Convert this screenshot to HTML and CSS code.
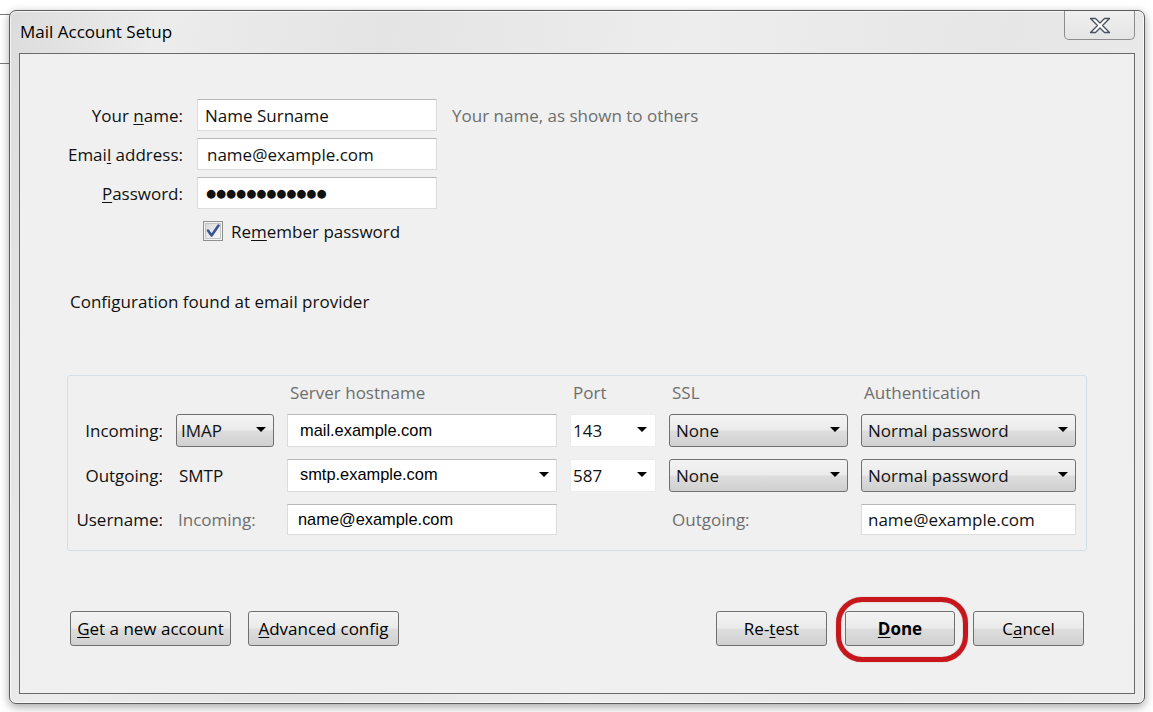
FILE: index.html
```html
<!DOCTYPE html>
<html lang="en">
<head>
  <meta charset="UTF-8">
  <title>Mail Account Setup</title>
  <link rel="stylesheet" href="styles.css">
</head>
<body>

<div class="behind"></div>

<div class="window">
  <div class="titlebar">
    <span class="title">Mail Account Setup</span>
    <div class="close">
      <svg width="22" height="17" viewBox="0 0 22 17">
        <path d="M1.5 1.5 H6.5 L11 6 L15.5 1.5 H20.5 L13.5 8.5 L20.5 15.5 H15.5 L11 11 L6.5 15.5 H1.5 L8.5 8.5 Z"
              fill="#fbfbfb" stroke="#47505e" stroke-width="1.3" stroke-linejoin="round"/>
      </svg>
    </div>
  </div>

  <div class="client">
    <div class="identity">
      <span class="lbl">Your <u>n</u>ame:</span>
      <div class="field">Name Surname</div>
      <span class="hint">Your name, as shown to others</span>

      <span class="lbl">Emai<u>l</u> address:</span>
      <div class="field email">name@example.com</div>
      <span></span>

      <span class="lbl"><u>P</u>assword:</span>
      <div class="field pass">●●●●●●●●●●●●</div>
      <span></span>

      <span></span>
      <div class="remember">
        <svg class="check" width="20" height="20" viewBox="0 0 20 20">
          <defs>
            <linearGradient id="cb" x1="0" y1="0" x2="1" y2="1">
              <stop offset="0" stop-color="#d8d8d8"/>
              <stop offset="1" stop-color="#fbfbfb"/>
            </linearGradient>
          </defs>
          <rect x="0.5" y="0.5" width="19" height="19" fill="#f4f4f4" stroke="#8e8f8f"/>
          <rect x="2.5" y="2.5" width="15" height="15" fill="url(#cb)" stroke="#c4c4c4"/>
          <path d="M5 9.5 L8.6 14.5 L15.5 4.5" fill="none" stroke="#3a5595" stroke-width="2.6" stroke-linecap="round" stroke-linejoin="round"/>
        </svg>
        <span>Re<u>m</u>ember password</span>
      </div>
    </div>

    <p class="status">Configuration found at email provider</p>

    <div class="servers">
      <span></span>
      <span></span>
      <span class="head">Server hostname</span>
      <span class="head">Port</span>
      <span class="head">SSL</span>
      <span class="head">Authentication</span>

      <span class="rlbl">Incoming:</span>
      <div class="select imap"><span>IMAP</span><i class="arrow"></i></div>
      <div class="field host">mail.example.com</div>
      <div class="field port"><span>143</span><i class="arrow"></i></div>
      <div class="select"><span>None</span><i class="arrow"></i></div>
      <div class="select"><span>Normal password</span><i class="arrow"></i></div>

      <span class="rlbl">Outgoing:</span>
      <span class="proto">SMTP</span>
      <div class="field host combo"><span>smtp.example.com</span><i class="arrow"></i></div>
      <div class="field port"><span>587</span><i class="arrow"></i></div>
      <div class="select"><span>None</span><i class="arrow"></i></div>
      <div class="select"><span>Normal password</span><i class="arrow"></i></div>

      <span class="rlbl">Username:</span>
      <span class="sub">Incoming:</span>
      <div class="field host user">name@example.com</div>
      <span></span>
      <span class="sub out">Outgoing:</span>
      <div class="field user-out">name@example.com</div>
    </div>

    <div class="actions">
      <div class="group">
        <button class="btn wide"><u>G</u>et a new account</button>
        <button class="btn mid"><u>A</u>dvanced config</button>
      </div>
      <div class="group">
        <button class="btn">Re-<u>t</u>est</button>
        <span class="done-wrap">
          <button class="btn done"><u>D</u>one</button>
          <span class="ring"></span>
        </span>
        <button class="btn">C<u>a</u>ncel</button>
      </div>
    </div>
  </div>
</div>

</body>
</html>
```

FILE: styles.css
```css
body {
  margin: 0;
  height: 712px;
  overflow: hidden;
  background: #fff;
  font-family: "Open Sans", "Noto Sans", sans-serif;
  font-size: 17px;
  color: #111;
}

u {
  text-underline-offset: 2px;
  text-decoration-thickness: 1px;
}

/* edge of another window peeking out behind */
.behind {
  position: absolute;
  left: 0;
  top: 14px;
  width: 10px;
  height: 48px;
  border-top: 1px solid #7a7a7a;
  border-bottom: 1px solid #7a7a7a;
}

.window {
  position: relative;
  margin: 10px 0 0 9px;
  width: 1136px;
  height: 694px;
  box-sizing: border-box;
  border: 1px solid #5c5c5c;
  border-radius: 7px;
  background: linear-gradient(100deg, #dcdcdc 0%, #ececec 12%, #e4e4e4 30%, #ededed 55%, #e6e6e6 80%, #ebebeb 100%);
  box-shadow: 0 3px 10px rgba(0, 0, 0, 0.35), inset 0 0 0 1px rgba(255, 255, 255, 0.7);
  display: flex;
  flex-direction: column;
}

.titlebar {
  height: 42px;
  display: flex;
  justify-content: space-between;
  padding-left: 10px;
}

.title {
  align-self: center;
  margin-top: -1px;
  font-size: 17px;
  color: #000;
}

.close {
  width: 71px;
  height: 29px;
  margin-right: 9px;
  box-sizing: border-box;
  border: 1px solid #8c8c8c;
  border-top: none;
  border-radius: 0 0 5px 5px;
  background: linear-gradient(#f0f0f0, #e4e4e4);
  display: flex;
  align-items: center;
  justify-content: center;
}

.client {
  flex: 1;
  margin: 0 9px 9px 9px;
  border: 1px solid #6a6a6a;
  background: #f0f0f0;
}

/* identity form */
.identity {
  margin-top: 45px;
  display: grid;
  grid-template-columns: 163px 240px 1fr;
  grid-template-rows: 32px 32px 32px 30px;
  column-gap: 14px;
  row-gap: 7px;
  align-items: center;
}

.lbl {
  text-align: right;
}

.field {
  height: 100%;
  box-sizing: border-box;
  background: #fff;
  border: 1px solid #dcdcdc;
  border-top-color: #b8b8b8;
  padding: 0 7px;
  display: flex;
  align-items: center;
}

.email {
  padding-left: 9px;
}

.pass {
  font-family: "DejaVu Sans", sans-serif;
  font-size: 11.5px;
  letter-spacing: 0;
  padding-left: 8px;
}

.hint {
  color: #6e6e6e;
  padding-left: 1px;
}

.remember {
  display: flex;
  align-items: center;
  gap: 8px;
  margin-left: 6px;
}

.status {
  margin: 44px 0 0 50px;
  line-height: 24px;
}

/* server settings panel */
.servers {
  margin: 61px 0 0 47px;
  width: 1020px;
  box-sizing: border-box;
  border: 1px solid #d3dee5;
  border-radius: 3px;
  padding: 6px 0 15px;
  display: grid;
  grid-template-columns: 95px 98px 270px 86px 179px 215px;
  grid-template-rows: 20px 33px 33px 31px;
  column-gap: 13px;
  row-gap: 12px;
  align-items: center;
}

.head {
  color: #6e6e6e;
  padding-left: 3px;
}

.rlbl {
  text-align: right;
}

.proto {
  padding-left: 3px;
}

.sub {
  color: #6e6e6e;
  padding-left: 2px;
}

.sub.out {
  padding-left: 3px;
}

.select {
  height: 100%;
  box-sizing: border-box;
  border: 1px solid #707070;
  border-radius: 3px;
  background: linear-gradient(#f3f3f3 0%, #ebebeb 48%, #dddddd 52%, #d0d0d0 100%);
  display: flex;
  align-items: center;
  justify-content: space-between;
  padding: 0 7px 0 6px;
}

.select.imap {
  padding-left: 4px;
}

.arrow {
  width: 0;
  height: 0;
  border-left: 5px solid transparent;
  border-right: 5px solid transparent;
  border-top: 5px solid #000;
  margin-top: -2px;
}

.host {
  font-family: "Liberation Sans", Arial, sans-serif;
  font-size: 16.4px;
  padding-left: 12px;
  color: #000;
}

.host.user {
  padding-left: 10px;
}

.combo {
  justify-content: space-between;
  padding-right: 7px;
}

.combo span {
  margin-top: -3px;
}

.port {
  justify-content: space-between;
  padding: 0 8px 0 2px;
  border-color: #ececec;
}

.user-out {
  padding-left: 6px;
}

/* bottom buttons */
.actions {
  margin-top: 60px;
  padding: 0 50px;
  display: flex;
  justify-content: space-between;
}

.group {
  display: flex;
  gap: 17px;
}

.group + .group {
  gap: 18px;
}

.btn {
  height: 35px;
  width: 111px;
  box-sizing: border-box;
  border: 1px solid #707070;
  border-radius: 3px;
  background: linear-gradient(#f3f3f3 0%, #ebebeb 48%, #dddddd 52%, #d0d0d0 100%);
  font: inherit;
  color: #000;
  padding: 0;
}

.btn.wide {
  width: 161px;
}

.btn.mid {
  width: 151px;
}

.btn.done {
  width: 110px;
  font-weight: bold;
}

.done-wrap {
  position: relative;
  display: flex;
}

.ring {
  position: absolute;
  left: -9px;
  right: -13px;
  top: -14px;
  bottom: -16px;
  border: 5px solid #c8161d;
  border-radius: 26px;
  box-shadow: 0 0 1px rgba(80, 0, 0, 0.6), inset 0 0 1px rgba(80, 0, 0, 0.6);
  pointer-events: none;
}
```
